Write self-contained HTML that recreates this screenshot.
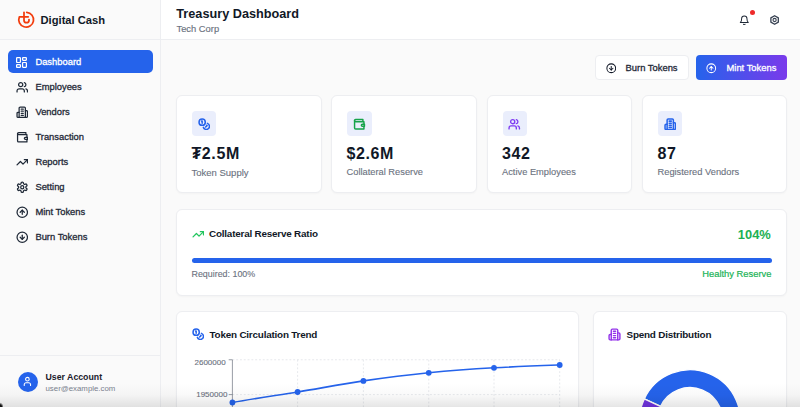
<!DOCTYPE html>
<html><head><meta charset="utf-8">
<style>
*{box-sizing:border-box;margin:0;padding:0}
html,body{width:800px;height:407px;overflow:hidden;background:#fafafa;font-family:"Liberation Sans",sans-serif;position:relative}
.a{position:absolute}
.t{position:absolute;white-space:nowrap;line-height:1}
svg.i{position:absolute;fill:none;stroke:currentColor;stroke-width:2;stroke-linecap:round;stroke-linejoin:round}
.card{position:absolute;background:#fff;border:1px solid #edeef1;border-radius:6px;box-shadow:0 1px 2px rgba(0,0,0,0.03)}
</style></head><body>

<!-- SIDEBAR -->
<div class="a" style="left:0;top:0;width:161px;height:407px;background:#fafafa;border-right:1px solid #edeef1"></div>
<div class="a" style="left:0;top:39px;width:160px;height:1px;background:#edeef1"></div>
<svg class="a" style="left:0;top:0" width="40" height="40" viewBox="0 0 40 40" fill="none" stroke="#f23c0d" stroke-width="1.75" stroke-linecap="round" stroke-linejoin="round">
  <path d="M28.2 16.8 H19.35 A7.4 7.4 0 1 0 26.74 12.31"/>
  <path d="M24 12.3 V20.2 A2.5 2.5 0 0 0 29 20.2 V19.6"/>
</svg>
<div class="t" style="left:40.5px;top:15.1px;font-size:11.2px;font-weight:700;color:#111827">Digital Cash</div>

<div class="a" style="left:8px;top:50.2px;width:144.5px;height:22.6px;background:#2563eb;border-radius:5px"></div>

<!-- nav icons -->
<svg class="i" style="left:15.1px;top:55.6px;color:#fff;stroke-width:2.3" width="13" height="13" viewBox="0 0 24 24"><rect width="7" height="9" x="3" y="3" rx="1"/><rect width="7" height="5" x="14" y="3" rx="1"/><rect width="7" height="9" x="14" y="12" rx="1"/><rect width="7" height="5" x="3" y="16" rx="1"/></svg>
<svg class="i" style="left:15.8px;top:80.7px;color:#1f2937;stroke-width:2.4" width="12.5" height="12.5" viewBox="0 0 24 24"><path d="M16 21v-2a4 4 0 0 0-4-4H6a4 4 0 0 0-4 4v2"/><circle cx="9" cy="7" r="4"/><path d="M22 21v-2a4 4 0 0 0-3-3.87"/><path d="M16 3.13a4 4 0 0 1 0 7.75"/></svg>
<svg class="i" style="left:15.6px;top:106.2px;color:#1f2937;stroke-width:2.4" width="12.5" height="12.5" viewBox="0 0 24 24"><path d="M6 22V4a2 2 0 0 1 2-2h8a2 2 0 0 1 2 2v18Z"/><path d="M6 12H4a2 2 0 0 0-2 2v6a2 2 0 0 0 2 2h2"/><path d="M18 9h2a2 2 0 0 1 2 2v9a2 2 0 0 1-2 2h-2"/><path d="M10 6h4"/><path d="M10 10h4"/><path d="M10 14h4"/><path d="M10 18h4"/></svg>
<svg class="i" style="left:15.6px;top:131.2px;color:#1f2937;stroke-width:2.4" width="12.5" height="12.5" viewBox="0 0 24 24"><path d="M21 12V7H5a2 2 0 0 1 0-4h14v4"/><path d="M3 5v14a2 2 0 0 0 2 2h16v-5"/><path d="M18 12a2 2 0 0 0 0 4h4v-4Z"/></svg>
<svg class="i" style="left:15.6px;top:156.2px;color:#1f2937;stroke-width:2.4" width="12.5" height="12.5" viewBox="0 0 24 24"><polyline points="22 7 13.5 15.5 8.5 10.5 2 17"/><polyline points="16 7 22 7 22 13"/></svg>
<svg class="i" style="left:15.6px;top:181.2px;color:#1f2937;stroke-width:2.4" width="12.5" height="12.5" viewBox="0 0 24 24"><path d="M12.22 2h-.44a2 2 0 0 0-2 2v.18a2 2 0 0 1-1 1.73l-.43.25a2 2 0 0 1-2 0l-.15-.08a2 2 0 0 0-2.73.73l-.22.38a2 2 0 0 0 .73 2.73l.15.1a2 2 0 0 1 1 1.72v.51a2 2 0 0 1-1 1.74l-.15.09a2 2 0 0 0-.73 2.73l.22.38a2 2 0 0 0 2.73.73l.15-.08a2 2 0 0 1 2 0l.43.25a2 2 0 0 1 1 1.73V20a2 2 0 0 0 2 2h.44a2 2 0 0 0 2-2v-.18a2 2 0 0 1 1-1.73l.43-.25a2 2 0 0 1 2 0l.15.08a2 2 0 0 0 2.73-.73l.22-.39a2 2 0 0 0-.73-2.73l-.15-.08a2 2 0 0 1-1-1.74v-.5a2 2 0 0 1 1-1.74l.15-.09a2 2 0 0 0 .73-2.73l-.22-.38a2 2 0 0 0-2.73-.73l-.15.08a2 2 0 0 1-2 0l-.43-.25a2 2 0 0 1-1-1.73V4a2 2 0 0 0-2-2z"/><circle cx="12" cy="12" r="3"/></svg>
<svg class="i" style="left:15.6px;top:206.2px;color:#1f2937;stroke-width:2.4" width="12.5" height="12.5" viewBox="0 0 24 24"><circle cx="12" cy="12" r="10"/><path d="m16 12-4-4-4 4"/><path d="M12 16V8"/></svg>
<svg class="i" style="left:15.6px;top:231.2px;color:#1f2937;stroke-width:2.4" width="12.5" height="12.5" viewBox="0 0 24 24"><circle cx="12" cy="12" r="10"/><path d="M12 8v8"/><path d="m8 12 4 4 4-4"/></svg>

<!-- nav text -->
<div class="t" style="left:35.4px;top:57.0px;font-size:9.4px;-webkit-text-stroke:0.3px currentColor;color:#fff">Dashboard</div>
<div class="t" style="left:35.4px;top:82.0px;font-size:9.4px;-webkit-text-stroke:0.3px currentColor;color:#1f2937">Employees</div>
<div class="t" style="left:35.4px;top:107.0px;font-size:9.4px;-webkit-text-stroke:0.3px currentColor;color:#1f2937">Vendors</div>
<div class="t" style="left:35.4px;top:132.0px;font-size:9.4px;-webkit-text-stroke:0.3px currentColor;color:#1f2937">Transaction</div>
<div class="t" style="left:35.4px;top:157.0px;font-size:9.4px;-webkit-text-stroke:0.3px currentColor;color:#1f2937">Reports</div>
<div class="t" style="left:35.4px;top:182.0px;font-size:9.4px;-webkit-text-stroke:0.3px currentColor;color:#1f2937">Setting</div>
<div class="t" style="left:35.4px;top:207.0px;font-size:9.4px;-webkit-text-stroke:0.3px currentColor;color:#1f2937">Mint Tokens</div>
<div class="t" style="left:35.4px;top:232.0px;font-size:9.4px;-webkit-text-stroke:0.3px currentColor;color:#1f2937">Burn Tokens</div>

<!-- user -->
<div class="a" style="left:0;top:354.5px;width:160px;height:1px;background:#edeef1"></div>
<div class="a" style="left:18px;top:372px;width:20px;height:20px;border-radius:50%;background:#2563eb"></div>
<svg class="i" style="left:22.3px;top:375.7px;color:#fff;stroke-width:2.4" width="10.8" height="10.8" viewBox="0 0 24 24"><path d="M19 21v-2a4 4 0 0 0-4-4H9a4 4 0 0 0-4 4v2"/><circle cx="12" cy="7" r="4"/></svg>
<div class="t" style="left:45.5px;top:373.2px;font-size:8.75px;font-weight:700;color:#1a202c">User Account</div>
<div class="t" style="left:45.5px;top:384.8px;font-size:7.85px;color:#7b8290">user@example.com</div>

<!-- HEADER -->
<div class="a" style="left:161px;top:0;width:639px;height:40px;background:#fff;border-bottom:1px solid #edeef1"></div>
<div class="t" style="left:176.3px;top:8.2px;font-size:12.7px;font-weight:700;color:#111827">Treasury Dashboard</div>
<div class="t" style="left:176.5px;top:25.1px;font-size:9.35px;-webkit-text-stroke:0.15px currentColor;color:#6b7280">Tech Corp</div>
<svg class="i" style="left:739.3px;top:14.9px;color:#1f2937;stroke-width:2.3" width="10.6" height="10.6" viewBox="0 0 24 24"><path d="M6 8a6 6 0 0 1 12 0c0 7 3 9 3 9H3s3-2 3-9"/><path d="M10.3 21a1.94 1.94 0 0 0 3.4 0"/></svg>
<div class="a" style="left:749.7px;top:9.7px;width:5.2px;height:5.2px;border-radius:50%;background:#ee2a2a"></div>
<svg class="a" style="left:0;top:0" width="800" height="40" viewBox="0 0 800 40" fill="none" stroke="#374151" stroke-linejoin="round"><path d="M774.60 15.70 L770.88 17.85 L770.88 22.15 L774.60 24.30 L778.32 22.15 L778.32 17.85 Z" stroke-width="1.3"/><circle cx="774.6" cy="20.0" r="1.6" stroke-width="1.1"/></svg>

<!-- BUTTONS -->
<div class="a" style="left:595.3px;top:55.3px;width:93.7px;height:24.9px;background:#fff;border:1px solid #edeef1;border-radius:4px"></div>
<svg class="i" style="left:605.9px;top:63px;color:#111827;stroke-width:2.3" width="10.5" height="10.5" viewBox="0 0 24 24"><circle cx="12" cy="12" r="10"/><path d="M12 8v8"/><path d="m8 12 4 4 4-4"/></svg>
<div class="t" style="left:625.6px;top:62.6px;font-size:9.4px;-webkit-text-stroke:0.3px currentColor;color:#1f2937">Burn Tokens</div>
<div class="a" style="left:696.3px;top:55.3px;width:90.7px;height:24.9px;background:linear-gradient(to right,#2563eb,#7a3aeb);border-radius:4px"></div>
<svg class="i" style="left:706.1px;top:63px;color:#fff;stroke-width:2.3" width="10.5" height="10.5" viewBox="0 0 24 24"><circle cx="12" cy="12" r="10"/><path d="m16 12-4-4-4 4"/><path d="M12 16V8"/></svg>
<div class="t" style="left:726.5px;top:62.6px;font-size:9.4px;-webkit-text-stroke:0.3px currentColor;color:#fff">Mint Tokens</div>

<!-- STAT CARDS -->
<div class="card" style="left:176px;top:95.2px;width:145.5px;height:98.3px"></div>
<div class="card" style="left:331px;top:95.2px;width:145.5px;height:98.3px"></div>
<div class="card" style="left:486.5px;top:95.2px;width:145.5px;height:98.3px"></div>
<div class="card" style="left:642px;top:95.2px;width:145px;height:98.3px"></div>

<div class="a" style="left:192px;top:111.4px;width:24.4px;height:24.4px;border-radius:4px;background:#eaeefc"></div>
<div class="a" style="left:347.2px;top:111.4px;width:24.4px;height:24.4px;border-radius:4px;background:#eaeefc"></div>
<div class="a" style="left:502.5px;top:111.4px;width:24.4px;height:24.4px;border-radius:4px;background:#eaeefc"></div>
<div class="a" style="left:658px;top:111.4px;width:24.4px;height:24.4px;border-radius:4px;background:#eaeefc"></div>

<svg class="i" style="left:197.9px;top:117.6px;color:#2563eb;stroke-width:2.9" width="12.5" height="12.5" viewBox="0 0 24 24"><circle cx="8" cy="8" r="6"/><path d="M18.09 10.37A6 6 0 1 1 10.34 18"/><path d="M7 6h1v4"/><path d="m16.71 13.88.7.71-2.82 2.82"/></svg>
<svg class="i" style="left:353.1px;top:117.6px;color:#16a34a;stroke-width:2.8" width="12.5" height="12.5" viewBox="0 0 24 24"><path d="M21 12V7H5a2 2 0 0 1 0-4h14v4"/><path d="M3 5v14a2 2 0 0 0 2 2h16v-5"/><path d="M18 12a2 2 0 0 0 0 4h4v-4Z"/></svg>
<svg class="i" style="left:508.4px;top:117.6px;color:#7e3af2;stroke-width:2.6" width="12.5" height="12.5" viewBox="0 0 24 24"><path d="M16 21v-2a4 4 0 0 0-4-4H6a4 4 0 0 0-4 4v2"/><circle cx="9" cy="7" r="4"/><path d="M22 21v-2a4 4 0 0 0-3-3.87"/><path d="M16 3.13a4 4 0 0 1 0 7.75"/></svg>
<svg class="i" style="left:663.9px;top:117.6px;color:#2563eb;stroke-width:2.9" width="12.5" height="12.5" viewBox="0 0 24 24"><path d="M6 22V4a2 2 0 0 1 2-2h8a2 2 0 0 1 2 2v18Z"/><path d="M6 12H4a2 2 0 0 0-2 2v6a2 2 0 0 0 2 2h2"/><path d="M18 9h2a2 2 0 0 1 2 2v9a2 2 0 0 1-2 2h-2"/><path d="M10 6h4"/><path d="M10 10h4"/><path d="M10 14h4"/><path d="M10 18h4"/></svg>

<div class="t" style="left:191.5px;top:146.3px;font-size:16px;font-weight:700;letter-spacing:0.6px;color:#111827">₮2.5M</div>
<div class="t" style="left:346.5px;top:146.3px;font-size:16px;font-weight:700;letter-spacing:0.6px;color:#111827">$2.6M</div>
<div class="t" style="left:502px;top:146.3px;font-size:16px;font-weight:700;letter-spacing:0.6px;color:#111827">342</div>
<div class="t" style="left:657.5px;top:146.3px;font-size:16px;font-weight:700;letter-spacing:0.6px;color:#111827">87</div>

<div class="t" style="left:191.5px;top:168px;font-size:9.5px;-webkit-text-stroke:0.12px currentColor;color:#6b7280">Token Supply</div>
<div class="t" style="left:346.5px;top:168px;font-size:9.3px;-webkit-text-stroke:0.12px currentColor;color:#6b7280">Collateral Reserve</div>
<div class="t" style="left:502px;top:168px;font-size:9.3px;-webkit-text-stroke:0.12px currentColor;color:#6b7280">Active Employees</div>
<div class="t" style="left:657.5px;top:168px;font-size:9.3px;-webkit-text-stroke:0.12px currentColor;color:#6b7280">Registered Vendors</div>

<!-- RATIO CARD -->
<div class="card" style="left:176px;top:208.7px;width:611px;height:87.5px"></div>
<svg class="i" style="left:191.5px;top:227.6px;color:#22c55e;stroke-width:2.4" width="12.5" height="12.5" viewBox="0 0 24 24"><polyline points="22 7 13.5 15.5 8.5 10.5 2 17"/><polyline points="16 7 22 7 22 13"/></svg>
<div class="t" style="left:209px;top:229.3px;font-size:9.9px;font-weight:700;letter-spacing:-0.2px;color:#111827">Collateral Reserve Ratio</div>
<div class="t" style="left:737.8px;top:228.5px;font-size:12.9px;font-weight:700;color:#1cb052">104%</div>
<div class="a" style="left:192px;top:258px;width:579.5px;height:4.5px;border-radius:3px;background:#2563eb"></div>
<div class="t" style="left:191.5px;top:269.8px;font-size:8.9px;-webkit-text-stroke:0.12px currentColor;color:#6b7280">Required: 100%</div>
<div class="t" style="left:702.3px;top:269.8px;font-size:9.35px;-webkit-text-stroke:0.2px currentColor;color:#20b356">Healthy Reserve</div>

<!-- CHART CARDS -->
<div class="card" style="left:176px;top:310.7px;width:402.9px;height:120px"></div>
<div class="card" style="left:593px;top:310.7px;width:194px;height:120px"></div>

<svg class="i" style="left:191.5px;top:327.9px;color:#2563eb;stroke-width:2.9" width="12.5" height="12.5" viewBox="0 0 24 24"><circle cx="8" cy="8" r="6"/><path d="M18.09 10.37A6 6 0 1 1 10.34 18"/><path d="M7 6h1v4"/><path d="m16.71 13.88.7.71-2.82 2.82"/></svg>
<div class="t" style="left:209.5px;top:329.8px;font-size:9.9px;font-weight:700;letter-spacing:-0.2px;color:#111827">Token Circulation Trend</div>

<svg class="i" style="left:608.4px;top:327.5px;color:#9333ea;stroke-width:2.6" width="13" height="13" viewBox="0 0 24 24"><path d="M6 22V4a2 2 0 0 1 2-2h8a2 2 0 0 1 2 2v18Z"/><path d="M6 12H4a2 2 0 0 0-2 2v6a2 2 0 0 0 2 2h2"/><path d="M18 9h2a2 2 0 0 1 2 2v9a2 2 0 0 1-2 2h-2"/><path d="M10 6h4"/><path d="M10 10h4"/><path d="M10 14h4"/><path d="M10 18h4"/></svg>
<div class="t" style="left:626.5px;top:329.8px;font-size:9.9px;font-weight:700;letter-spacing:-0.2px;color:#111827">Spend Distribution</div>

<!-- line chart -->
<svg class="a" style="left:0;top:0" width="800" height="407" viewBox="0 0 800 407">
  <g stroke="#dfe2e7" stroke-width="0.75" stroke-dasharray="1.9 1.9" fill="none">
    <line x1="232.4" y1="359.75" x2="560" y2="359.75"/>
    <line x1="232.4" y1="394.6" x2="560" y2="394.6"/>
    <line x1="297.6" y1="359.75" x2="297.6" y2="407"/>
    <line x1="363.4" y1="359.75" x2="363.4" y2="407"/>
    <line x1="428.75" y1="359.75" x2="428.75" y2="407"/>
    <line x1="494" y1="359.75" x2="494" y2="407"/>
    <line x1="559.7" y1="359.75" x2="559.7" y2="407"/>
  </g>
  <g stroke="#6b7280" stroke-width="0.7" fill="none">
    <line x1="232.4" y1="359.75" x2="232.4" y2="407"/>
    <line x1="228.7" y1="359.75" x2="232.4" y2="359.75"/>
    <line x1="228.7" y1="394.6" x2="232.4" y2="394.6"/>
  </g>
  <path d="M232.4 402.5 C254 398.5 276 395.5 297.6 392 C319 388.5 341 384.2 363.4 380.9 C385 377.8 407 375 428.75 372.8 C450 370.6 472 369 494 367.8 C516 366.6 538 365.8 559.7 365" fill="none" stroke="#2563eb" stroke-width="1.6"/>
  <g fill="#2563eb">
    <circle cx="232.4" cy="402.5" r="2.9"/>
    <circle cx="297.6" cy="392" r="2.9"/>
    <circle cx="363.4" cy="380.9" r="2.9"/>
    <circle cx="428.75" cy="372.8" r="2.9"/>
    <circle cx="494" cy="367.8" r="2.9"/>
    <circle cx="559.7" cy="365" r="2.9"/>
  </g>
  <!-- donut -->
  <g>
    <path d="M737.41 437.45 A50.45 50.45 0 0 0 644.28 398.88 L660.54 406.46 A32.5 32.5 0 0 1 720.54 431.32 Z" fill="#2563eb" stroke="#fff" stroke-width="1.4"/>
    <path d="M644.28 398.88 A50.45 50.45 0 0 0 672.75 467.61 L678.88 450.74 A32.5 32.5 0 0 1 660.54 406.46 Z" fill="#7033e0" stroke="#fff" stroke-width="1.4"/>
  </g>
</svg>
<div class="t" style="left:194.5px;top:358.7px;font-size:8px;-webkit-text-stroke:0.12px currentColor;color:#6b7280">2600000</div>
<div class="t" style="left:196.2px;top:390.5px;font-size:8px;-webkit-text-stroke:0.12px currentColor;color:#6b7280">1950000</div>

<!-- bottom shade -->
<div class="a" style="left:0;top:383px;width:800px;height:24px;background:linear-gradient(to bottom,rgba(0,0,0,0),rgba(0,0,0,0.025) 50%,rgba(0,0,0,0.1))"></div>


<div class="a" style="left:-3px;top:402px;width:6px;height:8px;border-radius:50%;background:radial-gradient(circle at 40% 60%,#111 0,#111 35%,rgba(0,0,0,0) 75%)"></div>
</body></html>
